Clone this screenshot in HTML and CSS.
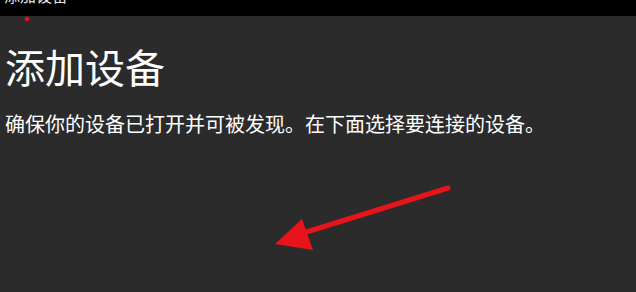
FILE: index.html
```html
<!DOCTYPE html>
<html lang="zh-CN">
<head>
<meta charset="utf-8">
<title>添加设备</title>
<link rel="stylesheet" href="styles.css">
</head>
<body>
<div class="titlebar"><span class="titlebar-text">添加设备</span></div>
<div class="dot"></div>
<main class="content">
  <h1 class="title">添加设备</h1>
  <p class="desc">确保你的设备已打开并可被发现。在下面选择要连接的设备。</p>
</main>
<svg class="arrow" width="636" height="292" viewBox="0 0 636 292">
  <line x1="448" y1="188" x2="300" y2="234" stroke="#e8141c" stroke-width="5" stroke-linecap="round"/>
  <polygon points="275,244 302,219 313,250" fill="#e8141c"/>
</svg>
</body>
</html>
```
FILE: styles.css
```css
html, body {
  margin: 0;
  padding: 0;
}
body {
  width: 636px;
  height: 292px;
  background: #2b2b2b;
  color: #ffffff;
  font-family: "Noto Sans CJK SC", "Noto Sans", sans-serif;
  overflow: hidden;
  position: relative;
}
.titlebar {
  height: 16px;
  background: #000000;
  overflow: hidden;
  padding-left: 4px;
}
.titlebar-text {
  display: block;
  font-size: 16px;
  line-height: 16px;
  margin-top: -13px;
  color: #e0e0e0;
}
.dot {
  position: absolute;
  left: 25px;
  top: 17px;
  width: 4px;
  height: 4px;
  border-radius: 50%;
  background: #e8141c;
  box-shadow: 0 0 2px #e8141c;
}
.content {
  padding-left: 5px;
}
.title {
  margin: 0;
  margin-top: 30px;
  font-size: 40px;
  font-weight: 400;
  line-height: 40px;
}
.desc {
  margin: 0;
  margin-top: 26px;
  font-size: 20px;
  line-height: 24px;
  font-weight: 400;
}
.arrow {
  position: absolute;
  left: 0;
  top: 0;
}
```
